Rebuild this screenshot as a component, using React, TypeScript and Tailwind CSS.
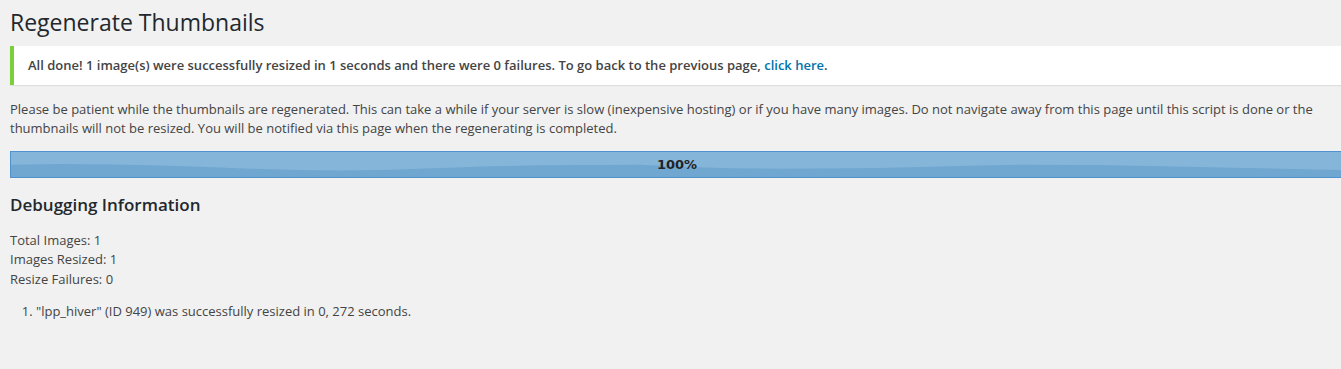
const wave: [number, number][] = [
  [0, 12.7], [50, 12], [100, 12.4], [140, 13.3], [190, 14.8], [240, 16.7], [290, 18], [330, 18.5],
  [380, 17.8], [430, 16], [480, 14.3], [530, 13.3], [580, 12.9], [630, 12.7], [680, 15], [720, 16.3],
  [770, 16.7], [870, 16], [940, 14.3], [1010, 12.7], [1090, 13], [1190, 15], [1334, 18],
];

function ProgressBar() {
  const d = 'M0 0 H1334 V' + wave[wave.length - 1][1] + ' ' +
    wave.slice().reverse().map(([x, y]) => `L${x} ${y}`).join(' ') + ' Z';
  return (
    <div className="relative h-[27px] w-full border border-[#4f92d0] bg-[#6fa7d0]">
      <svg className="absolute inset-0 h-full w-full" viewBox="0 0 1334 25" preserveAspectRatio="none">
        <path d={d} fill="#86b5da" />
      </svg>
      <div className="relative flex h-full items-center justify-center pt-[1px] font-['DejaVu_Sans',sans-serif] text-[13px] font-bold text-[#222]">
        100%
      </div>
    </div>
  );
}

export default function App() {
  return (
    <div className="h-[369px] w-full overflow-hidden bg-[#f1f1f1] font-['Open_Sans',sans-serif] text-[13px] text-[#444]">
      <div className="w-[1344px] pl-[10px]">
        {/* Title */}
        <h2 className="pt-[8px] pb-[4px] text-[23px] leading-[29px] font-normal text-[#23282d]">
          Regenerate Thumbnails
        </h2>

        {/* Success notice */}
        <div className="mt-[5px] border-l-4 border-[#7ad03a] bg-white px-[12px] py-[1px] shadow-[0_1px_1px_rgba(0,0,0,0.08)]">
          <p className="my-[6.5px] p-[2px] leading-[19.5px] font-semibold">
            All done! 1 image(s) were successfully resized in 1 seconds and there were 0 failures. To go back to the previous page,{' '}
            <a className="text-[#0073aa]">click here</a>.
          </p>
        </div>

        <p className="mt-[15px] mb-[12px] pr-[10px] leading-[19.5px]">
          Please be patient while the thumbnails are regenerated. This can take a while if your server is slow (inexpensive hosting) or if you have many images. Do not navigate away from this page until this script is done or the thumbnails will not be resized. You will be notified via this page when the regenerating is completed.
        </p>

        <ProgressBar />

        {/* Debug info */}
        <h3 className="mt-[15px] text-[17px] leading-[24px] font-semibold text-[#23282d]">Debugging Information</h3>
        <p className="mt-[14px] leading-[19.5px]">
          Total Images: <span>1</span>
          <br />
          Images Resized: <span>1</span>
          <br />
          Resize Failures: <span>0</span>
        </p>
        <ol className="mt-[13px] ml-[26px] list-decimal leading-[19.5px]">
          <li>"lpp_hiver" (ID 949) was successfully resized in 0, 272 seconds.</li>
        </ol>
      </div>
    </div>
  );
}
